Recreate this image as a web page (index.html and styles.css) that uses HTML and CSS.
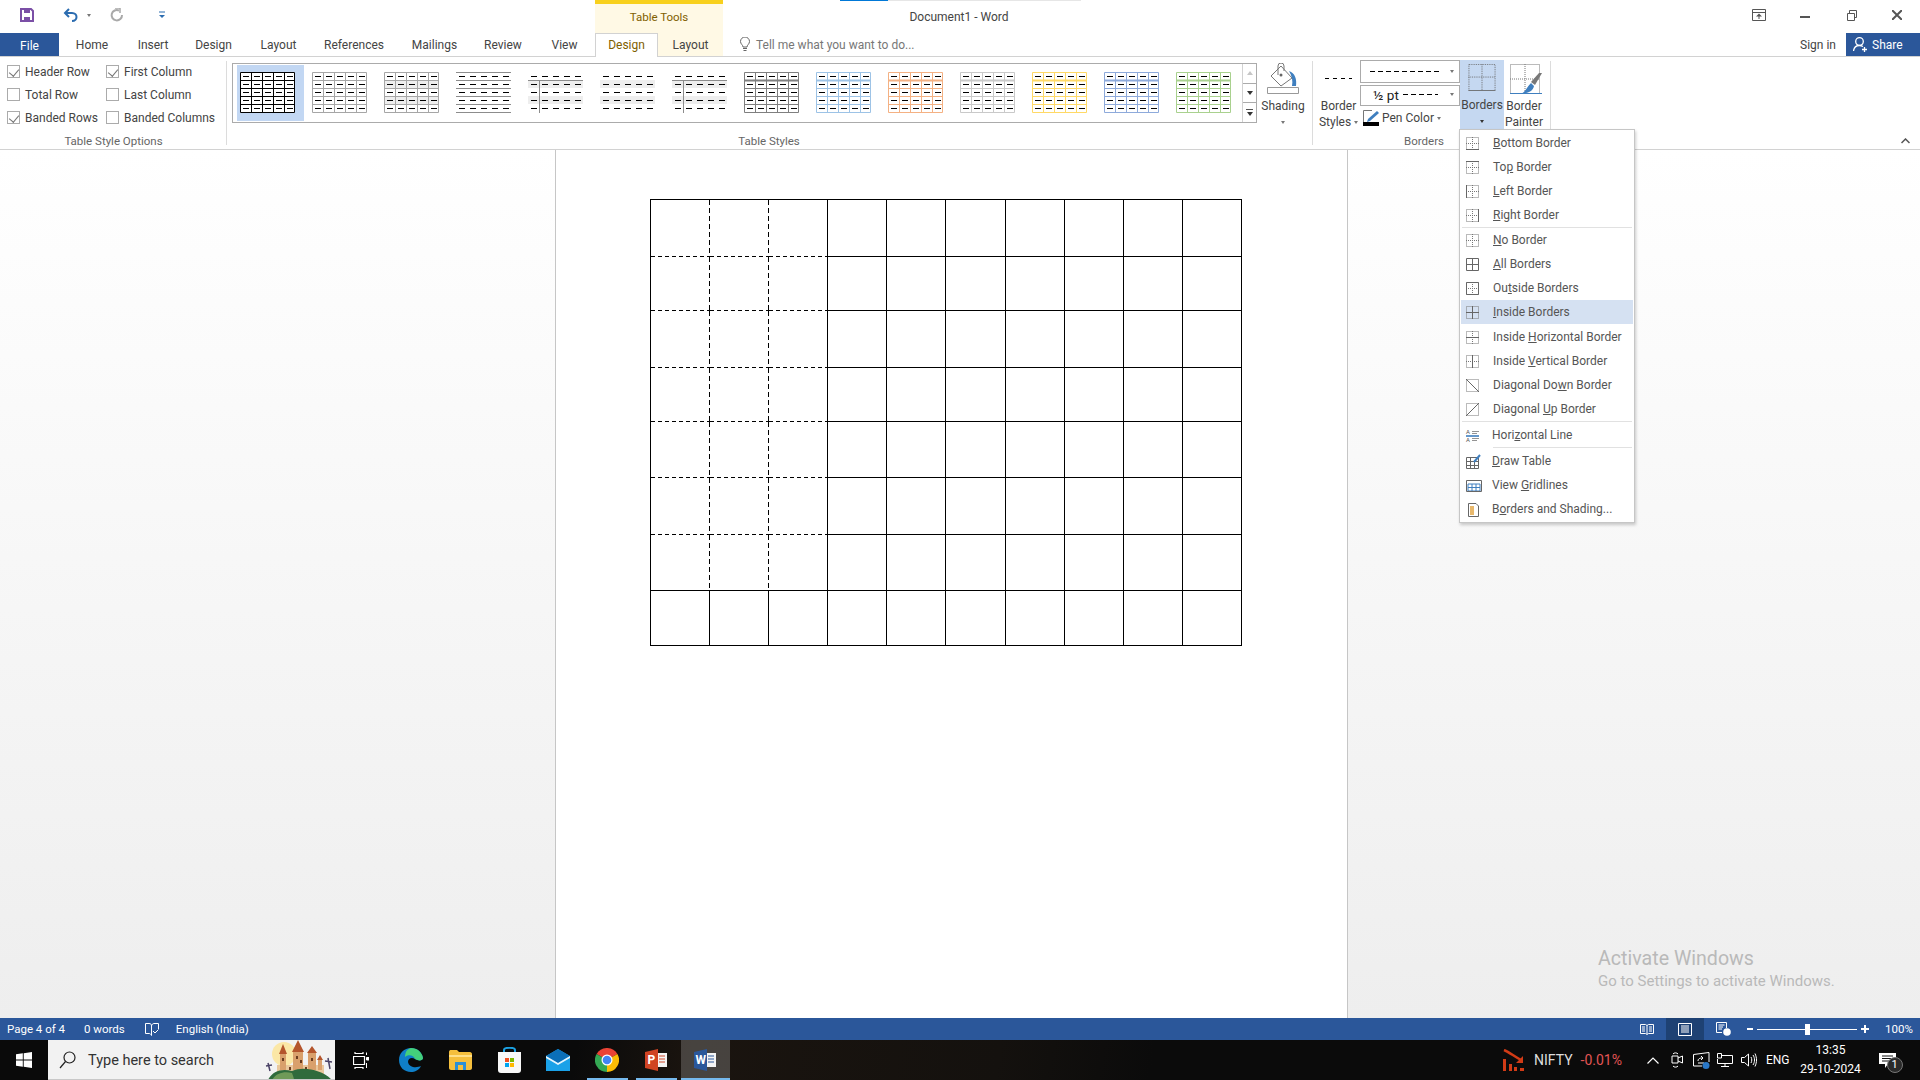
FILE: index.html
```html
<!DOCTYPE html>
<html lang="en">
<head>
    <meta charset="UTF-8">
    <title>Document1 - Word</title>
    <link rel="stylesheet" href="styles.css">
</head>
<body>
    <!-- shared pieces for the gallery thumbs and menu icons -->
    <svg class="defs" width="0" height="0">
        <symbol id="t-dash" viewBox="0 0 55 41">
            <path d="M3 4.5H54M3 12.5H54M3 20.5H54M3 28.5H54M3 36.5H54" stroke="#000" stroke-dasharray="6 5" fill="none"/>
        </symbol>
        <symbol id="t-grid" viewBox="0 0 55 41">
            <path d="M.5 .5H54.5V40.5H.5ZM11.5 0V41M22.5 0V41M33.5 0V41M44.5 0V41M0 8.5H55M0 16.5H55M0 24.5H55M0 32.5H55" stroke="currentColor" fill="none"/>
        </symbol>
        <symbol id="t-bands" viewBox="0 0 55 41">
            <path d="M0 8H55V16H0ZM0 24H55V32H0Z" fill="#eee"/>
        </symbol>
        <symbol id="m-dots" viewBox="0 0 13 13">
            <path d="M.5 .5H12.5V12.5H.5ZM6.5 0V13M0 6.5H13" stroke="#777" stroke-dasharray="1 1" fill="none"/>
        </symbol>
    </svg>

    <div class="progress"><span></span></div>

    <header class="titlebar">
        <div class="qat">
            <svg width="14" height="14" viewBox="0 0 14 14"><path d="M1 1H11L13 3V13H1Z" fill="none" stroke="#7b4fa6" stroke-width="2"/><path d="M4 1H10V5H4ZM4 9H10V13H4Z" fill="#7b4fa6"/></svg>
            <svg class="undo" width="18" height="14" viewBox="0 0 18 14"><path d="M2 5H9C15 5 15 13 9 13" fill="none" stroke="#2b6cb0" stroke-width="2"/><path d="M6 1L2 5L6 9" fill="none" stroke="#2b6cb0" stroke-width="2"/></svg>
            <span class="caret-sm undo-caret"></span>
            <svg class="redo" width="14" height="14" viewBox="0 0 14 14"><path d="M9 2.5A5.2 5.2 0 1 0 12 7" fill="none" stroke="#a9a9a9" stroke-width="2"/><path d="M5 0H10V5" fill="none" stroke="#a9a9a9" stroke-width="1.5"/></svg>
            <svg class="customize" width="6" height="8" viewBox="0 0 6 8"><path d="M0 1H6" stroke="#2b6cb0"/><path d="M0 4H6L3 7Z" fill="#2b6cb0"/></svg>
        </div>
        <div class="context-title">Table Tools</div>
        <div class="doc-title">Document1 - Word</div>
        <div class="win-controls">
            <svg class="ribbon-opt" width="14" height="12" viewBox="0 0 14 12"><path d="M.5 .5H13.5V11.5H.5ZM.5 3.5H13.5" fill="none" stroke="#555"/><path d="M7 4.5L10 7.5H4ZM6.5 7H7.5V10H6.5Z" fill="#555"/></svg>
            <svg class="min" width="10" height="2" viewBox="0 0 10 2"><path d="M0 1H10" stroke="#555" stroke-width="2"/></svg>
            <svg class="restore" width="10" height="11" viewBox="0 0 10 11"><path d="M.5 3.5H7.5V10.5H.5ZM2.5 3V.5H9.5V7.5H7.5" fill="none" stroke="#555"/></svg>
            <svg class="close" width="10" height="10" viewBox="0 0 10 10"><path d="M0 0L10 10M10 0L0 10" stroke="#555" stroke-width="2"/></svg>
        </div>
    </header>

    <nav class="tabs">
        <div class="tab file">File</div>
        <div class="tab w66">Home</div>
        <div class="tab w56">Insert</div>
        <div class="tab w65">Design</div>
        <div class="tab w65">Layout</div>
        <div class="tab w86">References</div>
        <div class="tab w75">Mailings</div>
        <div class="tab w62">Review</div>
        <div class="tab w61">View</div>
        <div class="tab ctx active">Design</div>
        <div class="tab ctx plain">Layout</div>
        <div class="tell">
            <svg width="10" height="15" viewBox="0 0 10 15"><path d="M3 10C3 8 .5 7 .5 4.5A4.5 4.5 0 0 1 9.5 4.5C9.5 7 7 8 7 10ZM3 11.5H7M3.5 13.5H6.5" fill="none" stroke="#666"/></svg>
            <span>Tell me what you want to do...</span>
        </div>
        <div class="sign-in">Sign in</div>
        <div class="share">
            <svg width="15" height="15" viewBox="0 0 15 15"><circle cx="6.5" cy="4.5" r="3.8" fill="none" stroke="#fff" stroke-width="1.3"/><path d="M.5 14C1 10 3 8.5 6.5 8.5C8 8.5 9 9 10 9.5M11.5 10V15M9 12.5H14" fill="none" stroke="#fff" stroke-width="1.3"/></svg>
            <span>Share</span>
        </div>
    </nav>

    <section class="ribbon">
        <div class="group options">
            <div class="group-body opts">
                <label class="opt"><span class="check on"></span>Header Row</label>
                <label class="opt"><span class="check on"></span>First Column</label>
                <label class="opt"><span class="check"></span>Total Row</label>
                <label class="opt"><span class="check"></span>Last Column</label>
                <label class="opt"><span class="check on"></span>Banded Rows</label>
                <label class="opt"><span class="check"></span>Banded Columns</label>
            </div>
            <div class="group-label">Table Style Options</div>
        </div>

        <div class="group styles">
            <div class="group-body styles-body">
                <div class="gallery">
                    <div class="thumbs">
                        <div class="thumb selected"><svg class="c-black"><use href="#t-grid"/><use href="#t-dash"/></svg></div>
                        <div class="thumb"><svg class="c-gray"><use href="#t-grid"/><use href="#t-dash"/></svg></div>
                        <div class="thumb"><svg class="c-gray"><use href="#t-bands"/><use href="#t-grid"/><use href="#t-dash"/></svg></div>
                        <div class="thumb"><svg><path class="hl" d="M0 .5H55M0 8.5H55M0 16.5H55M0 24.5H55M0 32.5H55M0 40.5H55"/><use href="#t-dash"/></svg></div>
                        <div class="thumb"><svg><use href="#t-bands"/><path class="hl" d="M0 8.5H55M11.5 8V41"/><use href="#t-dash"/></svg></div>
                        <div class="thumb"><svg><use href="#t-bands"/><use href="#t-dash"/></svg></div>
                        <div class="thumb"><svg><use href="#t-bands"/><path class="hl" d="M0 8.5H55M11.5 8V41"/><use href="#t-dash"/></svg></div>
                        <div class="thumb"><svg class="c-dark"><use href="#t-grid"/><path class="head" d="M0 8.5H55"/><use href="#t-dash"/></svg></div>
                        <div class="thumb"><svg class="c-blue"><use href="#t-grid"/><path class="head" d="M0 8.5H55"/><use href="#t-dash"/></svg></div>
                        <div class="thumb"><svg class="c-orange"><use href="#t-grid"/><path class="head" d="M0 8.5H55"/><use href="#t-dash"/></svg></div>
                        <div class="thumb"><svg class="c-silver"><use href="#t-grid"/><path class="head" d="M0 8.5H55"/><use href="#t-dash"/></svg></div>
                        <div class="thumb"><svg class="c-yellow"><use href="#t-grid"/><path class="head" d="M0 8.5H55"/><use href="#t-dash"/></svg></div>
                        <div class="thumb"><svg class="c-indigo"><use href="#t-grid"/><path class="head" d="M0 8.5H55"/><use href="#t-dash"/></svg></div>
                        <div class="thumb"><svg class="c-green"><use href="#t-grid"/><path class="head" d="M0 8.5H55"/><use href="#t-dash"/></svg></div>
                    </div>
                    <div class="gallery-scroll">
                        <div><span class="arrow-up"></span></div>
                        <div><span class="caret-sm dark"></span></div>
                        <div class="more"><span class="more-bar"></span><span class="caret-sm dark"></span></div>
                    </div>
                </div>
                <div class="big-btn shading">
                    <svg width="32" height="32" viewBox="0 0 32 32"><path d="M14 3L25 15L14 23L4 13Z" fill="#fff" stroke="#777"/><path d="M11 12V3A3 3 0 0 1 17 3V8" fill="none" stroke="#777"/><circle cx="14" cy="12" r="1.5" fill="#666"/><path d="M22 8C28 10 30 16 29 23H25C26 18 25 13 22 8Z" fill="#3f7fbf"/><path d="M.5 24.5H31.5V30.5H.5Z" fill="#fff" stroke="#999"/></svg>
                    <div class="btn-label">Shading</div>
                    <div class="btn-label"><span class="caret-sm"></span></div>
                </div>
            </div>
            <div class="group-label">Table Styles</div>
        </div>

        <div class="group borders">
            <div class="group-body borders-body">
                <div class="big-btn border-styles">
                    <div class="dash-sample"></div>
                    <div class="btn-label">Border</div>
                    <div class="btn-label">Styles <span class="caret-sm"></span></div>
                </div>
                <div class="pen-col">
                    <div class="pen-select"><span class="dash-line"></span><span class="caret-sm"></span></div>
                    <div class="pen-select second"><span class="weight">½ pt</span><span class="dash-line"></span><span class="caret-sm"></span></div>
                    <div class="pen-color">
                        <svg width="16" height="16" viewBox="0 0 16 16"><path d="M.5 12V.5H9" fill="none" stroke="#777"/><path d="M14 1L16 3L7 11L4 12L5 9Z" fill="#3f7fbf"/><path d="M0 12H16V16H0Z" fill="#000"/></svg>
                        <span>Pen Color</span><span class="caret-sm"></span>
                    </div>
                </div>
                <div class="big-btn borders-btn">
                    <svg width="30" height="30" viewBox="0 0 30 30"><path d="M.5 .5H29.5V29.5M.5 .5V29.5M15 0V29.5M0 14.5H29.5" fill="none" stroke="#666" stroke-dasharray="1 1"/><path d="M0 29.5H30" stroke="#666"/></svg>
                    <div class="btn-label">Borders</div>
                    <div class="btn-label"><span class="caret-sm dark"></span></div>
                </div>
                <div class="big-btn painter">
                    <svg width="32" height="32" viewBox="0 0 32 32"><path d="M.5 .5H29.5V29.5H.5ZM15 0V30M0 15H30" fill="none" stroke="#777" stroke-dasharray="1 1"/><path d="M0 29.5H32" stroke="#3f7fbf"/><path d="M32 9L25 21L21 18L29 9Z" fill="#777"/><path d="M21 19L24 22C23 27 19 29 11 30C16 27 17 23 21 19Z" fill="#3f7fbf"/></svg>
                    <div class="btn-label">Border</div>
                    <div class="btn-label">Painter</div>
                </div>
            </div>
            <div class="group-label">Borders</div>
        </div>

        <svg class="collapse" width="9" height="6" viewBox="0 0 9 6"><path d="M.5 5L4.5 1L8.5 5" fill="none" stroke="#555" stroke-width="1.5"/></svg>
    </section>

    <main class="workspace">
        <div class="page">
            <table class="doc-table">
                <tr class="h57"><td class="d"></td><td class="d"></td><td class="d"></td><td></td><td></td><td></td><td></td><td></td><td></td><td></td></tr>
                <tr class="h54"><td class="d"></td><td class="d"></td><td class="d"></td><td></td><td></td><td></td><td></td><td></td><td></td><td></td></tr>
                <tr class="h57"><td class="d"></td><td class="d"></td><td class="d"></td><td></td><td></td><td></td><td></td><td></td><td></td><td></td></tr>
                <tr class="h54"><td class="d"></td><td class="d"></td><td class="d"></td><td></td><td></td><td></td><td></td><td></td><td></td><td></td></tr>
                <tr class="h56"><td class="d"></td><td class="d"></td><td class="d"></td><td></td><td></td><td></td><td></td><td></td><td></td><td></td></tr>
                <tr class="h57"><td class="d"></td><td class="d"></td><td class="d"></td><td></td><td></td><td></td><td></td><td></td><td></td><td></td></tr>
                <tr class="h56"><td class="v"></td><td class="v"></td><td class="n"></td><td></td><td></td><td></td><td></td><td></td><td></td><td></td></tr>
                <tr class="h55"><td></td><td></td><td></td><td></td><td></td><td></td><td></td><td></td><td></td><td></td></tr>
            </table>
        </div>
        <div class="activate">
            <div class="activate-title">Activate Windows</div>
            <div class="activate-sub">Go to Settings to activate Windows.</div>
        </div>
    </main>

    <!-- borders dropdown, sits over the ribbon and page -->
    <div class="menu">
        <div class="item"><svg class="mi"><use href="#m-dots"/><path d="M0 12.5H13"/></svg><span><u>B</u>ottom Border</span></div>
        <div class="item"><svg class="mi"><use href="#m-dots"/><path d="M0 .5H13"/></svg><span>To<u>p</u> Border</span></div>
        <div class="item"><svg class="mi"><use href="#m-dots"/><path d="M.5 0V13"/></svg><span><u>L</u>eft Border</span></div>
        <div class="item"><svg class="mi"><use href="#m-dots"/><path d="M12.5 0V13"/></svg><span><u>R</u>ight Border</span></div>
        <div class="sep"></div>
        <div class="item"><svg class="mi"><use href="#m-dots"/></svg><span><u>N</u>o Border</span></div>
        <div class="item"><svg class="mi"><path d="M.5 .5H12.5V12.5H.5ZM6.5 0V13M0 6.5H13"/></svg><span><u>A</u>ll Borders</span></div>
        <div class="item"><svg class="mi"><use href="#m-dots"/><path d="M.5 .5H12.5V12.5H.5Z"/></svg><span>Ou<u>t</u>side Borders</span></div>
        <div class="item hover"><svg class="mi"><use href="#m-dots"/><path d="M6.5 0V13M0 6.5H13"/></svg><span><u>I</u>nside Borders</span></div>
        <div class="item after-hover"><svg class="mi"><use href="#m-dots"/><path d="M0 6.5H13"/></svg><span>Inside <u>H</u>orizontal Border</span></div>
        <div class="item"><svg class="mi"><use href="#m-dots"/><path d="M6.5 0V13"/></svg><span>Inside <u>V</u>ertical Border</span></div>
        <div class="item"><svg class="mi"><path class="dot" d="M.5 .5H12.5V12.5H.5Z"/><path d="M0 0L13 13"/></svg><span>Diagonal Do<u>w</u>n Border</span></div>
        <div class="item"><svg class="mi"><path class="dot" d="M.5 .5H12.5V12.5H.5Z"/><path d="M0 13L13 0"/></svg><span>Diagonal <u>U</u>p Border</span></div>
        <div class="sep spaced"></div>
        <div class="item alt"><svg class="mi"><path d="M6 2.5H13M6 4.5H11M6 9.5H13M6 11.5H11" stroke-width=".7"/><path class="blue" d="M0 7H13" stroke-width="1.6"/><text x="0" y="5" class="mi-letter">A</text><text x="0" y="13" class="mi-letter">A</text></svg><span>Hori<u>z</u>ontal Line</span></div>
        <div class="sep indent spaced"></div>
        <div class="item alt"><svg class="mi wide"><path d="M.5 2.5H12.5V13.5H.5ZM4.5 2V14M8.5 6V14M0 6.5H13M0 10.5H13"/><path class="blue" d="M14 0L8 7" stroke-width="2"/></svg><span><u>D</u>raw Table</span></div>
        <div class="item alt"><svg class="mi wide"><path class="blue" d="M2 5H14V12H2Z" fill="#cfe0f3"/><path class="blue" d="M2 8.5H14M6 5V12M10 5V12"/><path d="M.5 1.5H15.5V12.5H.5Z"/></svg><span>View <u>G</u>ridlines</span></div>
        <div class="item alt"><svg class="mi wide"><path d="M2.5 .5H10L12.5 3V13.5H2.5Z"/><path class="fill" d="M4 3H8V12H4Z"/></svg><span>B<u>o</u>rders and Shading...</span></div>
    </div>

    <footer class="statusbar">
        <span class="s-page">Page 4 of 4</span>
        <span class="s-words">0 words</span>
        <svg class="s-book" width="14" height="13" viewBox="0 0 14 13"><path d="M.5 .5H4C6 .5 6.5 1.5 6.5 3V12.5C6 11 5 10.5 4 10.5H.5ZM6.5 3C6.5 1.5 8 .5 9 .5H13.5V6M8 8L10 10L13.5 6.5" fill="none" stroke="#fff"/></svg>
        <span class="s-lang">English (India)</span>
        <div class="s-views">
            <svg class="v-read" width="14" height="13" viewBox="0 0 14 13"><path d="M.5 1.5H5.5L7 2.5L8.5 1.5H13.5V10.5H8.5L7 11.5L5.5 10.5H.5ZM7 2.5V11M2 4H5M2 6H5M2 8H5M9 4H12M9 6H12M9 8H12" fill="none" stroke="#fff"/></svg>
            <div class="v-print"><svg width="14" height="13" viewBox="0 0 14 13"><path d="M.5 .5H13.5V12.5H.5ZM3 3H11M3 5H11M3 7H11M3 9H11" fill="none" stroke="#fff"/></svg></div>
            <svg class="v-web" width="15" height="14" viewBox="0 0 15 14"><path d="M.5 .5H10.5V6M6 10.5H.5V.5M2.5 3H8.5M2.5 5H7M2.5 7H6" fill="none" stroke="#fff"/><circle cx="11" cy="10" r="3.8" fill="#fff"/></svg>
        </div>
        <div class="s-zoom">
            <span class="z-minus"></span>
            <div class="z-track"><span class="z-thumb"></span></div>
            <span class="z-plus"></span>
            <span class="z-pct">100%</span>
        </div>
    </footer>

    <div class="taskbar">
        <div class="start">
            <svg width="16" height="16" viewBox="0 0 16 16"><path d="M0 2.3L6.8 1.3V7.5H0ZM7.7 1.2L16 0V7.5H7.7ZM0 8.5H6.8V14.7L0 13.7ZM7.7 8.5H16V16L7.7 14.8Z" fill="#fff"/></svg>
        </div>
        <div class="search">
            <svg width="17" height="18" viewBox="0 0 17 18"><circle cx="10.5" cy="6.5" r="5.5" fill="none" stroke="#222" stroke-width="1.2"/><path d="M6.5 10.5L1 17" stroke="#222" stroke-width="1.2"/></svg>
            <span>Type here to search</span>
            <svg class="castle" width="72" height="40" viewBox="0 0 72 40">
                <circle cx="22" cy="14" r="12" fill="#fbe7a6"/>
                <path d="M15 25H62V36H15Z" fill="#e9c79c"/>
                <path d="M18 14H24V30H18ZM31 12H41V30H31ZM46 13H54V30H46ZM56 20H60V30H56Z" fill="#d9a06c"/>
                <path d="M17 14L21 4L25 14ZM30 12L36 0L42 12ZM45 13L50 6L55 13ZM55 20L58 15L61 20Z" fill="#b4552c"/>
                <path d="M20 18H22V21H20ZM34 16H36V19H34ZM38 20H40V23H38ZM49 18H51V21H49ZM27 27H29V30H27ZM43 27H45V30H43Z" fill="#6b3c20"/>
                <path d="M6 40C10 31 20 28 30 31C42 26 60 30 70 40Z" fill="#2f6b3c"/>
                <path d="M10 40C14 33 22 31 30 33C31 36 32 38 32 40Z" fill="#6f9a58"/>
                <path d="M6 23L8 31M4 26L10 25M66 18L68 29M63 21L70 22" stroke="#4a4266" stroke-width="1.5"/>
            </svg>
        </div>
        <div class="task-icons">
            <div class="task first">
                <svg width="16" height="17" viewBox="0 0 16 17"><path d="M2 0V1.5H10V0M2 17V15.5H10V17M.5 4.5H11.5V12.5H.5Z" fill="none" stroke="#fff" stroke-width="1.2"/><path d="M13.5 .5V3M13.5 5.5H16V8H13.5ZM13.5 11V16" stroke="#fff" fill="#fff"/></svg>
            </div>
            <div class="task">
                <svg width="24" height="24" viewBox="0 0 24 24"><path d="M12 0C5 0 0 5 0 12C0 19 5 24 12 24C16 24 20 22 22 18C18 20 10 20 9 14C9 10 13 9 16 11C19 13 24 13 24 10C23 4 18 0 12 0Z" fill="#0f7fc8"/><path d="M12 0C18 0 23 4 24 10C24 13 19 13 16 11C15 7 9 6 6 9C6 4 8 1 12 0Z" fill="#44d07b"/></svg>
            </div>
            <div class="task">
                <svg width="23" height="20" viewBox="0 0 23 20"><path d="M0 2C0 .5 1 0 2 0H8L10 2H21C22 2 23 3 23 4V18C23 19 22 20 21 20H2C1 20 0 19 0 18Z" fill="#f5bf3d"/><path d="M0 5H23V7H0Z" fill="#ffe08a"/><path d="M6 12H17V20H14V15H9V20H6Z" fill="#2a8fd6"/></svg>
            </div>
            <div class="task">
                <svg width="23" height="26" viewBox="0 0 23 26"><path d="M6 5V3C6 0 17 0 17 3V5" fill="none" stroke="#1ba1e2" stroke-width="2"/><path d="M0 5H23V23C23 25 22 26 20 26H3C1 26 0 25 0 23Z" fill="#f8f8f8"/><path d="M7 11H11V15H7Z" fill="#f25022"/><path d="M12 11H16V15H12Z" fill="#7fba00"/><path d="M7 16H11V20H7Z" fill="#00a4ef"/><path d="M12 16H16V20H12Z" fill="#ffb900"/></svg>
            </div>
            <div class="task">
                <svg width="24" height="22" viewBox="0 0 24 22"><path d="M0 7L12 0L24 7V22H0Z" fill="#1aa1e8"/><path d="M0 7L12 0L24 7L12 14Z" fill="#0b6fb8"/><path d="M0 7L12 14L24 7L24 9L12 16L0 9Z" fill="#e6f4fc"/></svg>
            </div>
            <div class="task open">
                <svg width="24" height="24" viewBox="0 0 24 24"><path d="M12 12L22.4 6A12 12 0 0 0 1.6 6Z" fill="#ea4335"/><path d="M12 12L1.6 6A12 12 0 0 0 12 24Z" fill="#34a853"/><path d="M12 12L12 24A12 12 0 0 0 22.4 6Z" fill="#fbbc05"/><circle cx="12" cy="12" r="5.5" fill="#fff"/><circle cx="12" cy="12" r="4.3" fill="#4285f4"/></svg>
            </div>
            <div class="task open">
                <svg width="23" height="22" viewBox="0 0 23 22"><path d="M9 4H22V18H9Z" fill="#f4f4f4"/><path d="M14 7H20M14 10H20M14 13H20" stroke="#d04a2a"/><path d="M0 3L13 0V22L0 19Z" fill="#d04423"/><text x="2.5" y="15" class="app-letter">P</text></svg>
            </div>
            <div class="task open active">
                <svg width="23" height="22" viewBox="0 0 23 22"><path d="M9 4H22V18H9Z" fill="#f4f4f4"/><path d="M14 7H20M14 10H20M14 13H20" stroke="#2b579a"/><path d="M0 3L13 0V22L0 19Z" fill="#2b579a"/><text x="1.5" y="15" class="app-letter">W</text></svg>
            </div>
        </div>
        <div class="tray">
            <svg class="nifty-ico" width="22" height="23" viewBox="0 0 22 23"><path d="M1 1C6 3 12 8 18 11" fill="none" stroke="#d13b16" stroke-width="2.5"/><path d="M20 7L20 14L13 14Z" fill="#d13b16"/><path d="M0 10H3V22H0ZM6 15H9V22H6ZM11 18H14V22H11ZM17 19H21V22H17Z" fill="#d13b16"/></svg>
            <span class="nifty">NIFTY</span>
            <span class="nifty-val">-0.01%</span>
            <svg class="t-chev" width="12" height="7" viewBox="0 0 12 7"><path d="M.5 6.5L6 1L11.5 6.5" fill="none" stroke="#fff" stroke-width="1.2"/></svg>
            <svg class="t-meet" width="12" height="16" viewBox="0 0 12 16"><path d="M1 4V11H7V4ZM7 6L11.5 4V11L7 9M2 2C3 .5 6 .5 7 2M2 14C3 15.5 6 15.5 7 14" fill="none" stroke="#fff"/></svg>
            <svg class="t-share" width="17" height="17" viewBox="0 0 17 17"><path d="M.5 2.5L16 .5V10M.5 2.5V14H9" fill="none" stroke="#fff"/><path d="M5 9C5 6 8 6 10 6M8 4L10 6L8 8M11 11H5" fill="none" stroke="#fff"/><circle cx="13" cy="13.5" r="3.5" fill="#2a78c8"/></svg>
            <svg class="t-net" width="16" height="14" viewBox="0 0 16 14"><path d="M4.5 2.5H15.5V10.5H.5V6M8 10.5V13.5M4 13.5H12M.5 .5H4.5V5H.5Z" fill="none" stroke="#fff"/></svg>
            <svg class="t-vol" width="16" height="14" viewBox="0 0 16 14"><path d="M.5 4.5H3.5L7.5 1V13L3.5 9.5H.5ZM10 4C11 6 11 8 10 10M12 2C14 5 14 9 12 12M14 .5C16 5 16 9 14 13.5" fill="none" stroke="#fff"/></svg>
            <span class="t-lang">ENG</span>
            <div class="clock"><div>13:35</div><div>29-10-2024</div></div>
            <div class="notif">
                <svg width="17" height="15" viewBox="0 0 17 15"><path d="M0 0H17V11H9L6 15V11H0Z" fill="#fff"/><path d="M3 3H14M3 5.5H14M3 8H10" stroke="#111"/></svg>
                <span class="notif-count">1</span>
            </div>
        </div>
    </div>
</body>
</html>
```

FILE: styles.css
```css
* {
    box-sizing: border-box;
}

html, body {
    margin: 0;
    padding: 0;
}

body {
    width: 1920px;
    height: 1080px;
    overflow: hidden;
    position: relative;
    font-family: "Roboto", "Liberation Sans", sans-serif;
    font-size: 12px;
    color: #444;
    background-color: #fff;
}

.defs {
    position: absolute;
}

.progress {
    position: absolute;
    left: 840px;
    top: 0;
    width: 241px;
    height: 1px;
    background-color: #e6e6e6;
}

.progress span {
    display: block;
    width: 48px;
    height: 1px;
    background-color: #0078d7;
}

/* title bar */
.titlebar {
    display: flex;
    height: 33px;
    position: relative;
}

.qat {
    width: 595px;
    display: flex;
    align-items: flex-start;
    padding: 8px 0 0 20px;
}

.undo {
    margin-left: 29px;
}

.undo-caret {
    margin: 6px 0 0 6px;
}

.redo {
    margin-left: 19px;
}

.customize {
    margin: 3px 0 0 35px;
}

.context-title {
    width: 128px;
    height: 33px;
    border-top: 4px solid #f8d01c;
    background-color: #fff9e5;
    color: #7f6000;
    font-size: 11.5px;
    line-height: 26px;
    text-align: center;
}

.doc-title {
    position: absolute;
    left: 859px;
    top: 10px;
    width: 200px;
    text-align: center;
    color: #444;
}

.win-controls {
    position: relative;
    flex: 1;
}

.ribbon-opt {
    position: absolute;
    left: 1029px;
    top: 9px;
}

.min {
    position: absolute;
    left: 1077px;
    top: 16px;
}

.restore {
    position: absolute;
    left: 1124px;
    top: 10px;
}

.close {
    position: absolute;
    left: 1169px;
    top: 10px;
}

/* tabs */
.tabs {
    display: flex;
    height: 24px;
    border-bottom: 1px solid #d2d2d2;
    align-items: stretch;
    position: relative;
}

.tab {
    text-align: center;
    line-height: 25px;
    flex: none;
}

.file {
    width: 59px;
    background-color: #2b579a;
    color: #fff;
    line-height: 27px;
}

.w56 { width: 56px; }
.w61 { width: 61px; }
.w62 { width: 62px; }
.w65 { width: 65px; }
.w66 { width: 66px; }
.w75 { width: 75px; }
.w86 { width: 86px; }

.ctx {
    background-color: #fff9e5;
}

.ctx.active {
    width: 63px;
    height: 24px;
    background-color: #fff;
    border: 1px solid #d2d2d2;
    border-bottom: none;
    color: #7f6000;
    line-height: 23px;
}

.ctx.plain {
    width: 65px;
}

.tell {
    display: flex;
    align-items: center;
    gap: 6px;
    margin-left: 15px;
    padding-left: 2px;
    color: #777;
}

.sign-in {
    position: absolute;
    left: 1800px;
    top: 0;
    line-height: 25px;
}

.share {
    position: absolute;
    left: 1846px;
    top: 0;
    width: 74px;
    height: 23px;
    background-color: #2b579a;
    color: #fff;
    display: flex;
    align-items: center;
    gap: 4px;
    padding-left: 7px;
}

/* ribbon */
.ribbon {
    display: flex;
    height: 93px;
    border-bottom: 1px solid #d2d2d2;
    position: relative;
}

.group {
    display: flex;
    flex-direction: column;
    flex: none;
    height: 92px;
    background: linear-gradient(#dcdcdc, #dcdcdc) right 4px / 1px 84px no-repeat;
}

.group-body {
    height: 77px;
    flex: none;
}

.group-label {
    text-align: center;
    font-size: 11.5px;
    color: #666;
    line-height: 14px;
}

.options {
    width: 227px;
}

.opts {
    display: grid;
    grid-template-columns: 99px 1fr;
    grid-auto-rows: 23px;
    padding: 3px 0 0 7px;
}

.opt {
    display: flex;
    align-items: center;
    gap: 5px;
    white-space: nowrap;
}

.check {
    width: 13px;
    height: 13px;
    border: 1px solid #ababab;
    position: relative;
    flex: none;
}

.check.on::after {
    content: "";
    position: absolute;
    left: 3px;
    top: 1px;
    width: 5px;
    height: 8px;
    border: solid #777;
    border-width: 0 1px 1px 0;
    transform: rotate(40deg);
}

.styles {
    width: 1086px;
}

.styles .group-label {
    padding-right: 2px;
}

.styles-body {
    display: flex;
    padding: 6px 0 0 5px;
}

.gallery {
    width: 1025px;
    height: 60px;
    border: 1px solid #ababab;
    display: flex;
}

.thumbs {
    flex: 1;
    display: flex;
    padding: 1px 0 0 4px;
    gap: 5px;
}

.thumb {
    width: 67px;
    height: 56px;
    padding: 7px 0 0 3px;
}

.thumb svg {
    display: block;
    width: 55px;
    height: 41px;
}

.thumb use {
    width: 55px;
    height: 41px;
}

.thumb.selected {
    background-color: #c2d7f3;
    position: relative;
}

.thumb.selected::before {
    content: "";
    position: absolute;
    left: 3px;
    top: 7px;
    width: 55px;
    height: 41px;
    background-color: #fff;
}

.thumb.selected svg {
    position: relative;
}

.hl {
    stroke: #8c8c8c;
    fill: none;
}

.head {
    stroke: currentColor;
    stroke-width: 2;
    fill: none;
}

.c-black { color: #000; }
.c-gray { color: #a6a6a6; }
.c-dark { color: #7f7f7f; }
.c-blue { color: #9dc3e6; }
.c-orange { color: #f4b183; }
.c-silver { color: #c9c9c9; }
.c-yellow { color: #ffd966; }
.c-indigo { color: #8eaadb; }
.c-green { color: #a9d18e; }

.gallery-scroll {
    width: 14px;
    border-left: 1px solid #d2d2d2;
    display: flex;
    flex-direction: column;
}

.gallery-scroll > div {
    flex: 1;
    display: flex;
    flex-direction: column;
    align-items: center;
    justify-content: center;
    gap: 2px;
    border-bottom: 1px solid #ababab;
}

.gallery-scroll > div:last-child {
    border-bottom: none;
}

.gallery-scroll .caret-sm {
    border-width: 4px 3px 0;
    border-top-color: #555;
}

.arrow-up {
    width: 0;
    height: 0;
    border: solid transparent;
    border-width: 0 3px 4px;
    border-bottom-color: #c6c6c6;
}

.more-bar {
    width: 7px;
    height: 1px;
    background-color: #555;
}

.caret-sm {
    display: inline-block;
    width: 0;
    height: 0;
    border: solid transparent;
    border-width: 3px 2.5px 0;
    border-top-color: #777;
    vertical-align: middle;
}

.caret-sm.dark {
    border-top-color: #333;
}

.big-btn {
    flex: none;
    display: flex;
    flex-direction: column;
    align-items: center;
    text-align: center;
    white-space: nowrap;
}

.btn-label {
    line-height: 16px;
    height: 16px;
}

.shading {
    width: 50px;
    margin-left: 1px;
}

.shading svg {
    margin-bottom: 3px;
}

.borders {
    width: 238px;
}

.borders .group-label {
    padding-right: 16px;
}

.borders-body {
    display: flex;
    padding-top: 3px;
}

.border-styles {
    width: 47px;
    padding: 18px 0 0 4px;
}

.dash-sample {
    width: 27px;
    height: 20px;
    background: repeating-linear-gradient(to right, #000 0 4px, transparent 4px 8px) top / 100% 1px no-repeat;
}

.pen-col {
    width: 100px;
    display: flex;
    flex-direction: column;
}

.pen-select {
    height: 23px;
    border: 1px solid #ababab;
    display: flex;
    align-items: center;
    padding: 0 5px 0 9px;
    justify-content: space-between;
}

.pen-select.second {
    height: 21px;
    margin-top: 2px;
    padding: 0 5px 2px 12px;
    gap: 4px;
}

.weight {
    color: #222;
    font-size: 13.5px;
}

.dash-line {
    flex: 1;
    height: 1px;
    margin-right: 8px;
    background: repeating-linear-gradient(to right, #000 0 5px, transparent 5px 8px);
}

.pen-color {
    display: flex;
    align-items: center;
    gap: 3px;
    padding: 4px 0 0 3px;
}

.borders-btn {
    width: 44px;
    height: 69px;
    background-color: #c5d8f1;
    padding-top: 4px;
}

.borders-btn svg {
    margin-bottom: 6px;
}

.painter {
    width: 40px;
    padding-top: 4px;
}

.painter svg {
    margin: 0 -4px 2px 0;
}

.collapse {
    position: absolute;
    left: 1901px;
    top: 81px;
}

/* document area */
.workspace {
    position: relative;
    height: 868px;
    padding-left: 555px;
    background: linear-gradient(#fff, #eee);
}

.page {
    width: 793px;
    height: 868px;
    background-color: #fff;
    border: solid #c6c6c6;
    border-width: 0 1px;
    padding: 49px 0 0 94px;
}

.doc-table {
    border-collapse: collapse;
    table-layout: fixed;
    width: 592px;
}

.doc-table td {
    border: 1px solid #000;
    padding: 0;
}

/* word's dash length is longer than css dashed, so the lines are drawn as gradients */
.doc-table td.d,
.doc-table td.v,
.doc-table td.n {
    border: none;
    background-repeat: no-repeat;
}

.doc-table td.d {
    background-image:
        repeating-linear-gradient(to right, #000 0 4px, transparent 4px 7px),
        repeating-linear-gradient(to bottom, #000 0 5px, transparent 5px 8px);
    background-size: 100% 1px, 1px 100%;
    background-position: bottom, right;
}

.doc-table td.v {
    background-image: repeating-linear-gradient(to bottom, #000 0 5px, transparent 5px 8px);
    background-size: 1px 100%;
    background-position: right;
}

/* third column: its right edge is the solid line of the fourth */
.doc-table td.d:nth-child(3) {
    background-image: repeating-linear-gradient(to right, #000 0 4px, transparent 4px 7px), none;
}

.doc-table tr:first-child td.d {
    border-top: 1px solid #000;
}

.doc-table td.d:first-child,
.doc-table td.v:first-child {
    border-left: 1px solid #000;
}

/* the middle dashed lines stop at the table's own outer rules */
.doc-table tr:last-child td {
    border: 1px solid #000;
}

.h54 { height: 54px; }
.h55 { height: 55px; }
.h56 { height: 56px; }
.h57 { height: 57px; }

.activate {
    position: absolute;
    left: 1598px;
    top: 797px;
    color: #b9b9b9;
}

.activate-title {
    font-size: 19.6px;
    line-height: 24px;
}

.activate-sub {
    font-size: 15px;
    line-height: 21px;
}

/* dropdown */
.menu {
    position: absolute;
    left: 1459px;
    top: 129px;
    width: 176px;
    height: 394px;
    background-color: #fff;
    border: 1px solid #c6c6c6;
    box-shadow: 1px 2px 3px rgba(0, 0, 0, 0.2);
    padding: 1px;
    color: #555;
}

.item {
    height: 24px;
    display: flex;
    align-items: center;
    padding-left: 5px;
}

.item.after-hover {
    margin-top: 1px;
}

.item span {
    margin-left: 14px;
}

.item.alt span {
    margin-left: 13px;
}

.item.hover {
    background-color: #d5e1f2;
}

.mi {
    width: 13px;
    height: 13px;
    flex: none;
    overflow: visible;
}

.mi use {
    width: 13px;
    height: 13px;
}

.mi path {
    stroke: #666;
    fill: none;
}

.mi path.dot {
    stroke-dasharray: 1 1;
    stroke: #777;
}

.mi path.blue {
    stroke: #3f7fbf;
}

.mi path.fill {
    stroke: none;
    fill: #e8b86c;
}

.mi-letter {
    font-size: 6px;
    fill: #555;
}

.sep {
    height: 1px;
    margin: 0 1px;
    background-color: #e1e1e1;
}

.sep.spaced {
    margin-bottom: 1px;
}

.sep.indent {
    margin-left: 32px;
}

/* status bar */
.statusbar {
    height: 22px;
    background-color: #2b579a;
    color: #fff;
    display: flex;
    align-items: center;
    font-size: 11.5px;
    position: relative;
    padding-left: 7px;
}

.s-words {
    margin-left: 19px;
}

.s-book {
    margin-left: 20px;
}

.s-lang {
    margin-left: 17px;
}

.s-views {
    position: absolute;
    left: 1640px;
    top: 0;
    height: 22px;
    display: flex;
    align-items: center;
}

.v-print {
    width: 38px;
    height: 22px;
    margin: 0 12px;
    background-color: #1e4173;
    display: flex;
    align-items: center;
    justify-content: center;
}

.s-zoom {
    position: absolute;
    left: 1747px;
    top: 0;
    height: 22px;
    display: flex;
    align-items: center;
}

.z-minus {
    width: 6px;
    height: 2px;
    background-color: #fff;
}

.z-track {
    width: 100px;
    height: 1px;
    margin: 0 4px;
    background-color: #fff;
    position: relative;
}

.z-thumb {
    position: absolute;
    left: 48px;
    top: -5px;
    width: 5px;
    height: 11px;
    background-color: #fff;
}

.z-plus {
    width: 8px;
    height: 8px;
    background:
        linear-gradient(#fff, #fff) center / 8px 2px no-repeat,
        linear-gradient(#fff, #fff) center / 2px 8px no-repeat;
}

.z-pct {
    margin-left: 16px;
}

/* taskbar */
.taskbar {
    height: 40px;
    display: flex;
    position: relative;
    color: #fff;
    background: linear-gradient(100deg, #0a0a0a 30%, #1a140f 36%, #14110e 52%, #0b0b0b 60%);
}

.start {
    width: 48px;
    display: flex;
    align-items: center;
    justify-content: center;
}

.search {
    width: 287px;
    background-color: #f2f2f2;
    border: solid #c8c8c8;
    border-width: 0 0 1px;
    display: flex;
    align-items: center;
    color: #333;
    font-size: 14.5px;
    padding: 1px 0 0 11px;
    position: relative;
    overflow: hidden;
}

.search span {
    margin-left: 12px;
}

.castle {
    position: absolute;
    right: 1px;
    top: 0;
}

.task-icons {
    display: flex;
}

.task {
    width: 49px;
    height: 40px;
    display: flex;
    align-items: center;
    justify-content: center;
    position: relative;
}

.task.first {
    width: 51.5px;
}

.task.open::after {
    content: "";
    position: absolute;
    left: 4px;
    right: 4px;
    bottom: 0;
    height: 2px;
    background-color: #76b9ed;
}

.task.active {
    background-color: rgba(255, 255, 255, 0.2);
}

.task.active::after {
    left: 0;
    right: 0;
}

.app-letter {
    font-size: 12px;
    font-weight: 700;
    fill: #fff;
}

.tray {
    position: absolute;
    left: 1503px;
    top: 0;
    height: 40px;
    width: 417px;
    display: flex;
    align-items: center;
    font-size: 13px;
}

.nifty {
    margin-left: 9px;
    font-size: 14px;
    color: #ddd;
}

.nifty-val {
    margin-left: 8px;
    font-size: 14px;
    color: #e25555;
}

.t-chev { margin-left: 25px; }
.t-meet { margin-left: 12px; }
.t-share { margin-left: 10px; }
.t-net { margin-left: 7px; }
.t-vol { margin-left: 8px; }

.t-lang {
    margin-left: 9px;
    font-size: 12px;
}

.clock {
    width: 66px;
    margin-left: 8px;
    text-align: center;
    font-size: 12px;
    line-height: 19px;
}

.notif {
    position: relative;
    margin-left: 15px;
}

.notif svg {
    display: block;
}

.notif-count {
    position: absolute;
    left: 8px;
    top: 4px;
    width: 16px;
    height: 16px;
    border-radius: 50%;
    background-color: #2a2a2a;
    border: 1px solid #777;
    font-size: 11px;
    line-height: 14px;
    text-align: center;
}
```
